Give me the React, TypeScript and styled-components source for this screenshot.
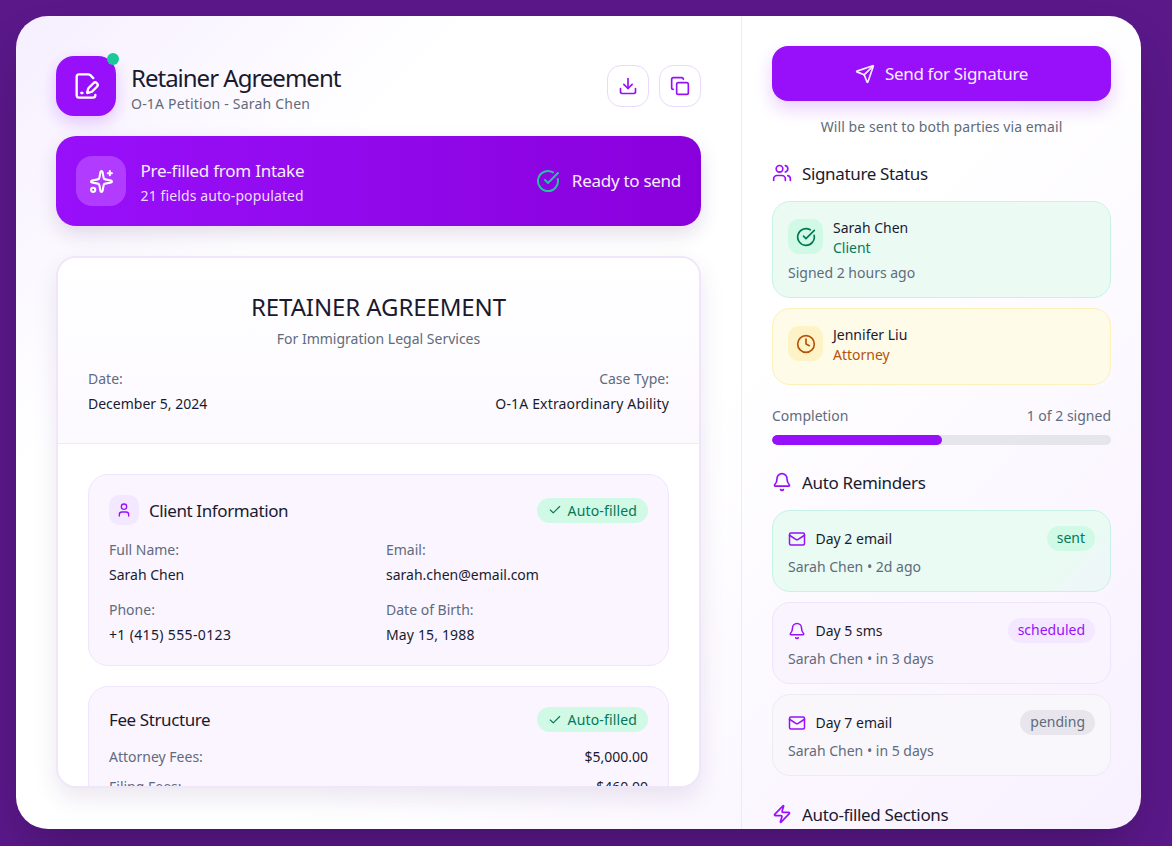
import React from 'react';
import styled, { createGlobalStyle } from 'styled-components';
import {
    Bell, Check, CircleCheckBig, Clock, Copy, Download, FilePenLine,
    Mail, Send, Sparkles, User, Users, Zap,
} from 'lucide-react';

const GlobalStyle = createGlobalStyle`
    html, body {
        margin: 0;
        height: 100%;
        overflow: hidden;
    }
    body {
        font-family: "Noto Sans", "Open Sans", sans-serif;
        color: #1a1a2e;
        background: #5a1889;
    }
    * { box-sizing: border-box; }
`;

const Page = styled.div`
    width: 1172px;
    height: 846px;
    padding: 16px 31px 17px 16px;
`;

const Panel = styled.div`
    display: grid;
    grid-template-columns: 726px 399px;
    height: 813px;
    border-radius: 32px;
    overflow: hidden;
    background: linear-gradient(135deg, #f6efff 0%, #ffffff 24%, #ffffff 55%, #f8f0ff 100%);
    box-shadow: 0 25px 50px -12px rgba(0, 0, 0, 0.25);
`;

const LeftColumn = styled.div`
    display: flex;
    flex-direction: column;
    padding: 40px 40px 0;
    border-right: 1px solid #f0e8fb;
`;

const Header = styled.div`
    display: flex;
    align-items: center;
    height: 60px;
    margin-bottom: 20px;
`;

const AppIcon = styled.div`
    position: relative;
    display: flex;
    align-items: center;
    justify-content: center;
    width: 60px;
    height: 60px;
    margin-right: 15px;
    border-radius: 18px;
    color: #fff;
    background: #9810fa;
    box-shadow: 0 6px 16px rgba(152, 16, 250, 0.22);
`;

const OnlineDot = styled.span`
    position: absolute;
    top: -3px;
    right: -3px;
    width: 12px;
    height: 12px;
    border-radius: 50%;
    background: #1cc79a;
`;

const TitleBlock = styled.div`
    flex: 1;
    padding-top: 4px;
`;

const Title = styled.div`
    font-size: 24px;
    line-height: 32px;
    letter-spacing: -1px;
`;

const Subtitle = styled.div`
    font-size: 14px;
    line-height: 20px;
    letter-spacing: 0.2px;
    color: #5f6b7c;
`;

const HeaderActions = styled.div`
    display: flex;
    gap: 10px;
`;

const IconButton = styled.button`
    display: flex;
    align-items: center;
    justify-content: center;
    width: 42px;
    height: 42px;
    padding: 0;
    border: 1px solid #ead9fe;
    border-radius: 14px;
    color: #9810fa;
    background: #fff;
`;

const Banner = styled.div`
    display: flex;
    align-items: center;
    height: 90px;
    padding: 0 20px;
    margin-bottom: 30px;
    border-radius: 20px;
    color: #fff;
    background: linear-gradient(90deg, #9810fa 0%, #8a00dc 100%);
    box-shadow: 0 8px 20px rgba(60, 20, 100, 0.14);
`;

const BannerIcon = styled.div`
    display: flex;
    align-items: center;
    justify-content: center;
    width: 50px;
    height: 50px;
    margin-right: 14.5px;
    border-radius: 16px;
    background: #b13bff;
`;

const BannerText = styled.div`
    flex: 1;
    padding-top: 3px;
`;

const BannerTitle = styled.div`
    font-size: 17px;
    line-height: 25px;
    letter-spacing: -0.25px;
    color: #f7edff;
`;

const BannerSub = styled.div`
    font-size: 14px;
    line-height: 25px;
    letter-spacing: 0.12px;
    color: #eedcff;
`;

const ReadyStatus = styled.div`
    display: flex;
    align-items: center;
    gap: 12px;
    font-size: 17px;
    line-height: 26px;
    letter-spacing: -0.28px;
    color: #f7edff;
`;

const DocCard = styled.div`
    height: 532px;
    overflow: hidden;
    border: 2px solid #efe6fc;
    border-radius: 20px;
    background: #fff;
    box-shadow: 0 10px 24px rgba(60, 20, 100, 0.1);
`;

const DocHead = styled.div`
    height: 186px;
    padding: 31px 30px 0;
    border-bottom: 1px solid #ececf1;
    background: linear-gradient(180deg, #ffffff 0%, #fcf9ff 100%);
`;

const DocTitle = styled.div`
    font-size: 24px;
    line-height: 36px;
    text-align: center;
    letter-spacing: -0.1px;
`;

const DocSubtitle = styled.div`
    margin-top: 4px;
    font-size: 14px;
    line-height: 20px;
    text-align: center;
    color: #5f6b7c;
`;

const DocMeta = styled.div`
    display: flex;
    justify-content: space-between;
    margin-top: 20px;
`;

const MetaCell = styled.div<{ $right?: boolean }>`
    text-align: ${props => props.$right ? 'right' : 'left'};
`;

const FieldLabel = styled.div`
    font-size: 14px;
    line-height: 20px;
    color: #5f6b7c;
`;

const FieldValue = styled.div<{ $tracking?: number }>`
    margin-top: 5px;
    font-size: 14px;
    line-height: 20px;
    letter-spacing: ${props => props.$tracking || 0}px;
    color: #1a1a2e;
`;

const DocBody = styled.div`
    display: flex;
    flex-direction: column;
    gap: 20px;
    padding: 30px;
`;

const Section = styled.div`
    padding: 20px;
    border: 1px solid #efe5fd;
    border-radius: 20px;
    background: #faf5ff;
`;

const SectionHead = styled.div`
    display: flex;
    align-items: center;
    justify-content: space-between;
    margin-bottom: 15px;
`;

const SectionName = styled.div`
    display: flex;
    align-items: center;
    gap: 10px;
    font-size: 17px;
    letter-spacing: -0.4px;
`;

const SectionIcon = styled.div`
    display: flex;
    align-items: center;
    justify-content: center;
    width: 30px;
    height: 30px;
    border-radius: 10px;
    color: #9810fa;
    background: #f3e8ff;
`;

const AutoBadge = styled.div`
    display: flex;
    align-items: center;
    gap: 6px;
    height: 25px;
    padding: 0 11px;
    border-radius: 13px;
    font-size: 14px;
    letter-spacing: 0.15px;
    color: #047857;
    background: #d0fae5;
`;

const FieldGrid = styled.div`
    display: grid;
    grid-template-columns: 1fr 1fr;
    gap: 15px;
`;

const FeeRow = styled.div`
    display: flex;
    justify-content: space-between;
    font-size: 14px;
    line-height: 20px;
    margin-bottom: 10px;
`;

const FeeLabel = styled.span`
    color: #5f6b7c;
`;

const RightColumn = styled.div`
    padding: 30px 30px 0;
    overflow: hidden;
`;

const SendButton = styled.button`
    display: flex;
    align-items: center;
    justify-content: center;
    gap: 10px;
    width: 100%;
    height: 55px;
    padding-top: 1px;
    border: none;
    border-radius: 16px;
    font-family: inherit;
    font-size: 17px;
    letter-spacing: -0.33px;
    color: #f7edff;
    background: #9810fa;
    box-shadow: 0 8px 18px rgba(152, 16, 250, 0.2);
`;

const SendNote = styled.div`
    margin-top: 16px;
    font-size: 14px;
    line-height: 20px;
    letter-spacing: 0.08px;
    text-align: center;
    color: #5f6b7c;
`;

const SideHeading = styled.div<{ $top: number }>`
    display: flex;
    align-items: center;
    gap: 10px;
    height: 24px;
    margin: ${props => props.$top}px 0 16px;
    font-size: 17px;
    letter-spacing: -0.35px;
    color: #9810fa;
`;

const SideHeadingText = styled.span`
    color: #1a1a2e;
`;

const StatusCard = styled.div<{ $tone: 'green' | 'yellow' }>`
    padding: 15px 15px ${props => props.$tone === 'green' ? 14 : 20}px;
    margin-bottom: 10px;
    border-radius: 18px;
    border: 1px solid ${props => props.$tone === 'green' ? '#c6f3e3' : '#fdf0b8'};
    background: ${props => props.$tone === 'green' ? '#ebfbf4' : '#fefbe9'};
`;

const StatusTop = styled.div`
    display: flex;
    align-items: center;
    gap: 10px;
`;

const StatusIcon = styled.div<{ $tone: 'green' | 'yellow' }>`
    display: flex;
    align-items: center;
    justify-content: center;
    width: 35px;
    height: 35px;
    margin-top: -1px;
    border-radius: 11px;
    color: ${props => props.$tone === 'green' ? '#047857' : '#b45309'};
    background: ${props => props.$tone === 'green' ? '#d0fae5' : '#fef3c6'};
`;

const PersonBlock = styled.div`
    padding-top: 1px;
    margin-bottom: -1px;
`;

const PersonName = styled.div`
    font-size: 14px;
    line-height: 20px;
`;

const PersonRole = styled.div<{ $tone: 'green' | 'yellow' }>`
    font-size: 14px;
    line-height: 20px;
    color: ${props => props.$tone === 'green' ? '#047857' : '#b45309'};
`;

const SignedAt = styled.div`
    margin-top: 6px;
    font-size: 14px;
    line-height: 20px;
    color: #5f6b7c;
`;

const ProgressRow = styled.div`
    display: flex;
    justify-content: space-between;
    margin-top: 21px;
    font-size: 14px;
    line-height: 20px;
    color: #5f6b7c;
`;

const ProgressTrack = styled.div`
    height: 10px;
    margin-top: 9px;
    overflow: hidden;
    border-radius: 5px;
    background: #e5e5ec;
`;

const ProgressFill = styled.div`
    height: 100%;
    border-radius: 5px;
    background: #9810fa;
`;

const ReminderList = styled.div`
    display: flex;
    flex-direction: column;
    gap: 10px;
`;

const toneStyles = {
    sent: { border: '#c6f3e3', bg: 'linear-gradient(135deg, #e9fbf3 0%, #e9fbf3 82%, #eef7f8 90%)', chip: '#d0fae5', text: '#047857' },
    scheduled: { border: '#f0e4fd', bg: '#faf4ff', chip: '#f3e8ff', text: '#9810fa' },
    pending: { border: '#ececf1', bg: '#f9f7fc', chip: '#e8e6ec', text: '#5f6b7c' },
};

type ReminderTone = keyof typeof toneStyles;

const ReminderCard = styled.div<{ $tone: ReminderTone }>`
    height: 82px;
    padding: 15px;
    border: 1px solid ${props => toneStyles[props.$tone].border};
    border-radius: 18px;
    background: ${props => toneStyles[props.$tone].bg};
`;

const ReminderTop = styled.div`
    display: flex;
    align-items: center;
    height: 25px;
    color: #9810fa;
`;

const ReminderName = styled.span`
    flex: 1;
    margin-left: 9.5px;
    font-size: 14px;
    color: #1a1a2e;
`;

const ReminderChip = styled.span<{ $tone: ReminderTone }>`
    height: 25px;
    padding: 0 10px;
    border-radius: 13px;
    font-size: 14px;
    line-height: 24px;
    color: ${props => toneStyles[props.$tone].text};
    background: ${props => toneStyles[props.$tone].chip};
`;

const ReminderInfo = styled.div`
    margin-top: 6px;
    font-size: 14px;
    line-height: 20px;
    color: #5f6b7c;
`;

const reminders: { name: string; info: string; tone: ReminderTone; icon: 'mail' | 'bell' }[] = [
    { name: 'Day 2 email', info: 'Sarah Chen • 2d ago', tone: 'sent', icon: 'mail' },
    { name: 'Day 5 sms', info: 'Sarah Chen • in 3 days', tone: 'scheduled', icon: 'bell' },
    { name: 'Day 7 email', info: 'Sarah Chen • in 5 days', tone: 'pending', icon: 'mail' },
];

const Field = ({ label, value, tracking }: { label: string; value: string; tracking?: number }) => (
    <div>
        <FieldLabel>{ label }</FieldLabel>
        <FieldValue $tracking={tracking}>{ value }</FieldValue>
    </div>
);

const AutoFilled = () => (
    <AutoBadge>
        <Check size={14} />
        Auto-filled
    </AutoBadge>
);

const App = () => (
    <Page>
        <GlobalStyle />
        <Panel>
            <LeftColumn>
                <Header>
                    <AppIcon>
                        <FilePenLine size={28} />
                        <OnlineDot />
                    </AppIcon>
                    <TitleBlock>
                        <Title>Retainer Agreement</Title>
                        <Subtitle>O-1A Petition - Sarah Chen</Subtitle>
                    </TitleBlock>
                    <HeaderActions>
                        <IconButton><Download size={20} /></IconButton>
                        <IconButton><Copy size={20} /></IconButton>
                    </HeaderActions>
                </Header>
                <Banner>
                    <BannerIcon><Sparkles size={25} /></BannerIcon>
                    <BannerText>
                        <BannerTitle>Pre-filled from Intake</BannerTitle>
                        <BannerSub>21 fields auto-populated</BannerSub>
                    </BannerText>
                    <ReadyStatus>
                        <CircleCheckBig size={24} color="#1cc79a" />
                        Ready to send
                    </ReadyStatus>
                </Banner>
                <DocCard>
                    <DocHead>
                        <DocTitle>RETAINER AGREEMENT</DocTitle>
                        <DocSubtitle>For Immigration Legal Services</DocSubtitle>
                        <DocMeta>
                            <MetaCell>
                                <FieldLabel>Date:</FieldLabel>
                                <FieldValue>December 5, 2024</FieldValue>
                            </MetaCell>
                            <MetaCell $right>
                                <FieldLabel>Case Type:</FieldLabel>
                                <FieldValue $tracking={0.16}>O-1A Extraordinary Ability</FieldValue>
                            </MetaCell>
                        </DocMeta>
                    </DocHead>
                    <DocBody>
                        <Section>
                            <SectionHead>
                                <SectionName>
                                    <SectionIcon><User size={16} /></SectionIcon>
                                    Client Information
                                </SectionName>
                                <AutoFilled />
                            </SectionHead>
                            <FieldGrid>
                                <Field label="Full Name:" value="Sarah Chen" />
                                <Field label="Email:" value="sarah.chen@email.com" />
                                <Field label="Phone:" value="+1 (415) 555-0123" tracking={0.35} />
                                <Field label="Date of Birth:" value="May 15, 1988" tracking={0.15} />
                            </FieldGrid>
                        </Section>
                        <Section>
                            <SectionHead>
                                <SectionName>Fee Structure</SectionName>
                                <AutoFilled />
                            </SectionHead>
                            <FeeRow>
                                <FeeLabel>Attorney Fees:</FeeLabel>
                                <span>$5,000.00</span>
                            </FeeRow>
                            <FeeRow>
                                <FeeLabel>Filing Fees:</FeeLabel>
                                <span>$460.00</span>
                            </FeeRow>
                        </Section>
                    </DocBody>
                </DocCard>
            </LeftColumn>
            <RightColumn>
                <SendButton>
                    <Send size={20} />
                    Send for Signature
                </SendButton>
                <SendNote>Will be sent to both parties via email</SendNote>
                <SideHeading $top={24}>
                    <Users size={20} />
                    <SideHeadingText>Signature Status</SideHeadingText>
                </SideHeading>
                <StatusCard $tone="green">
                    <StatusTop>
                        <StatusIcon $tone="green"><CircleCheckBig size={20} /></StatusIcon>
                        <PersonBlock>
                            <PersonName>Sarah Chen</PersonName>
                            <PersonRole $tone="green">Client</PersonRole>
                        </PersonBlock>
                    </StatusTop>
                    <SignedAt>Signed 2 hours ago</SignedAt>
                </StatusCard>
                <StatusCard $tone="yellow">
                    <StatusTop>
                        <StatusIcon $tone="yellow"><Clock size={20} /></StatusIcon>
                        <PersonBlock>
                            <PersonName>Jennifer Liu</PersonName>
                            <PersonRole $tone="yellow">Attorney</PersonRole>
                        </PersonBlock>
                    </StatusTop>
                </StatusCard>
                <ProgressRow>
                    <span>Completion</span>
                    <span>1 of 2 signed</span>
                </ProgressRow>
                <ProgressTrack>
                    <ProgressFill style={{ width: `${(1 / 2) * 100}%` }} />
                </ProgressTrack>
                <SideHeading $top={25}>
                    <Bell size={20} />
                    <SideHeadingText>Auto Reminders</SideHeadingText>
                </SideHeading>
                <ReminderList>
                    { reminders.map(r => (
                        <ReminderCard key={r.name} $tone={r.tone}>
                            <ReminderTop>
                                { r.icon === 'mail' ? <Mail size={18} /> : <Bell size={18} /> }
                                <ReminderName>{ r.name }</ReminderName>
                                <ReminderChip $tone={r.tone}>{ r.tone }</ReminderChip>
                            </ReminderTop>
                            <ReminderInfo>{ r.info }</ReminderInfo>
                        </ReminderCard>
                    )) }
                </ReminderList>
                <SideHeading $top={26}>
                    <Zap size={20} />
                    <SideHeadingText>Auto-filled Sections</SideHeadingText>
                </SideHeading>
            </RightColumn>
        </Panel>
    </Page>
);

export default App;
